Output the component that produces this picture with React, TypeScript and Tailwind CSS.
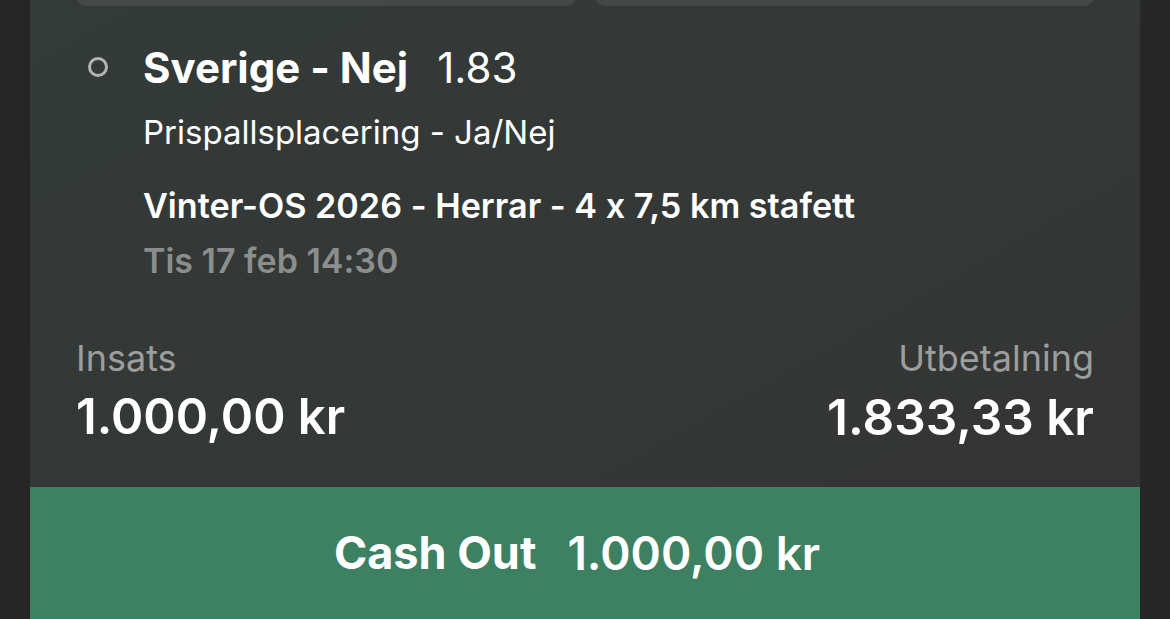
import React from "react";

export default function App() {
  return (
    <div
      className="w-[1170px] h-[619px] overflow-hidden bg-[#262626] flex justify-center"
      style={{ fontFamily: "Inter, 'Noto Sans', sans-serif", fontFeatureSettings: "'calt' 0" }}
    >
      <div className="w-[1110px] h-[629px] rounded-b-[10px] overflow-hidden bg-gradient-to-br from-[#333a37] via-[#343836] to-[#343434] flex flex-col">
        <div className="px-[45px] flex gap-[17px] -mt-[44px]">
          <div className="flex-1 h-[50px] rounded-[12px] bg-[#444847]" />
          <div className="flex-1 h-[50px] rounded-[12px] bg-[#444847]" />
        </div>
        <div className="px-[46px] pt-[41px]">
          <div className="flex items-center h-[40px]">
            <div className="w-[20px] h-[20px] rounded-full border-[3px] border-[#b4b4b4] ml-[12px]" />
            <span className="ml-[35px] text-[42px] font-bold text-white">Sverige - Nej</span>
            <span className="ml-[29px] text-[42px] font-normal text-white">1.83</span>
          </div>
          <div className="pl-[67px]">
            <div className="mt-[29px] h-[34px] flex items-center text-[33px] text-white">Prispallsplacering - Ja/Nej</div>
            <div className="mt-[39px] h-[34px] flex items-center text-[34.2px] font-semibold text-white">Vinter-OS 2026 - Herrar - 4 x 7,5 km stafett</div>
            <div className="mt-[20px] h-[34px] flex items-center text-[34px] font-semibold text-[#8c8e8d]">Tis 17 feb 14:30</div>
          </div>
          <div className="mt-[63px] flex justify-between">
            <div className="flex flex-col">
              <span className="h-[36px] flex items-center text-[36px] text-[#9c9e9d]">Insats</span>
              <span className="mt-[19px] h-[44px] flex items-center text-[49px] font-semibold text-white">1.000,00 kr</span>
            </div>
            <div className="flex flex-col items-end">
              <span className="h-[36px] flex items-center text-[36px] text-[#9c9e9d]">Utbetalning</span>
              <span className="mt-[19px] h-[44px] flex items-center text-[49.5px] font-semibold text-white">1.833,33 kr</span>
            </div>
          </div>
        </div>
        <div className="mt-auto h-[142px] bg-[#3d8162] flex items-start justify-center pt-[44px] pr-[16px]">
          <span className="text-[45px] font-bold text-white h-[44px] flex items-center">Cash Out</span>
          <span className="ml-[31px] text-[46px] font-semibold text-white h-[44px] flex items-center">1.000,00 kr</span>
        </div>
      </div>
    </div>
  );
}
